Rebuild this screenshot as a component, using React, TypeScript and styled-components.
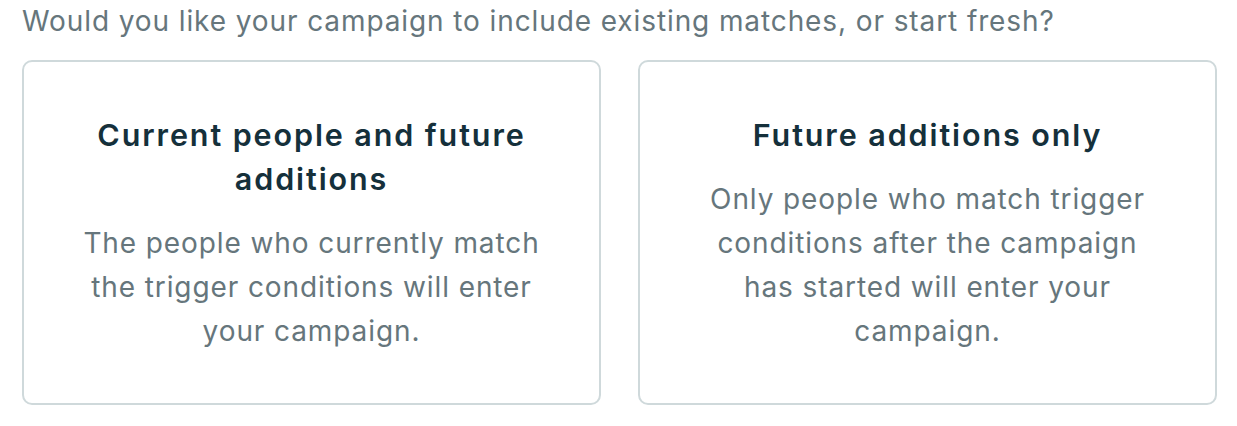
import React from "react";
import styled, { createGlobalStyle } from "styled-components";

const Global = createGlobalStyle`
  html, body { margin: 0; padding: 0; background: #ffffff; }
  body { font-family: Inter, "Noto Sans", sans-serif; -webkit-font-smoothing: antialiased; }
  * { box-sizing: border-box; }
`;

const Page = styled.div`
  padding: 2px 20px 0 22px;
  display: flex;
  flex-direction: column;
  gap: 20px;
`;

const Question = styled.p`
  margin: 0;
  font-size: 28px;
  line-height: 38px;
  letter-spacing: 0.9px;
  color: #66767c;
  font-weight: 400;
`;

const Options = styled.div`
  display: grid;
  grid-template-columns: 579px 579px;
  column-gap: 37px;
`;

const Card = styled.button`
  height: 345px;
  border: 2px solid #cfd9db;
  border-radius: 10px;
  background: #ffffff;
  padding: 0 55px;
  display: flex;
  flex-direction: column;
  align-items: center;
  justify-content: center;
  gap: 20px;
  font-family: inherit;
  cursor: pointer;
  text-align: center;
`;

const Title = styled.h3`
  margin: 0;
  font-size: 30.5px;
  line-height: 44px;
  letter-spacing: 1.9px;
  font-weight: 620;
  color: #15303b;
`;

const Description = styled.p`
  margin: 0;
  font-size: 28px;
  line-height: 44px;
  letter-spacing: 0.9px;
  color: #66767c;
  font-weight: 400;
`;

const options = [
  {
    title: "Current people and future additions",
    description:
      "The people who currently match the trigger conditions will enter your campaign.",
  },
  {
    title: "Future additions only",
    description:
      "Only people who match trigger conditions after the campaign has started will enter your campaign.",
  },
];

export default function App() {
  return (
    <>
      <Global />
      <Page>
        <Question>
          Would you like your campaign to include existing matches, or start fresh?
        </Question>
        <Options>
          {options.map((o) => (
            <Card key={o.title} type="button">
              <Title>{o.title}</Title>
              <Description>{o.description}</Description>
            </Card>
          ))}
        </Options>
      </Page>
    </>
  );
}
